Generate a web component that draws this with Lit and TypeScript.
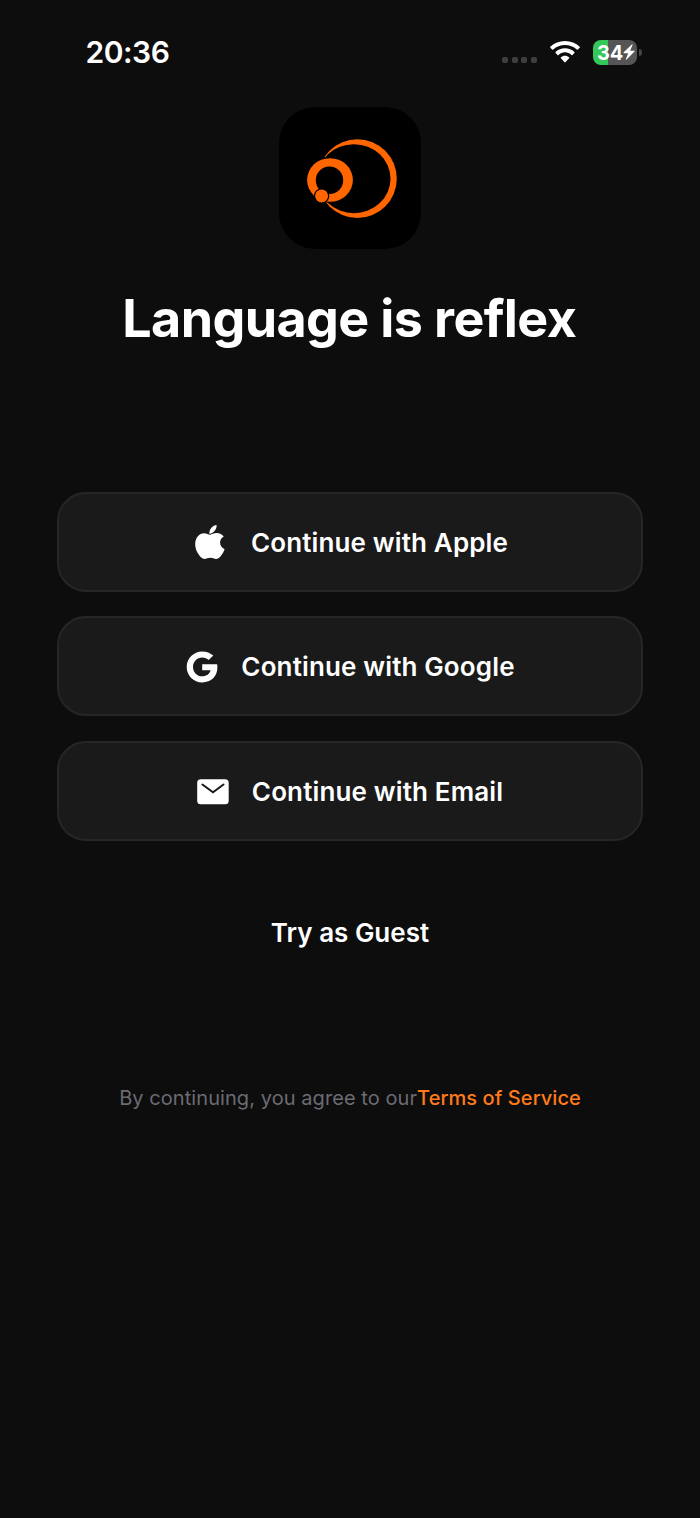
import { LitElement, html, css, svg } from "lit";
import { customElement } from "lit/decorators.js";

const appleIcon = svg`<svg class="apple" viewBox="0 0 30 36" width="30" height="36">
  <path fill="#fff" d="M21.600 1c.2 2.300-.7 4.500-2.100 6.100-1.400 1.600-3.300 2.800-5.200 2.700-.2-2.200.8-4.600 2.100-6.100C17.700 2.200 19.900 1.100 21.600 1z"/>
  <path fill="#fff" d="M28.700 12.500c-2.300 1.400-3.600 3.500-3.600 6.100 0 3 1.800 5.500 4.500 6.600-.6 1.900-1.500 3.700-2.700 5.400-1.600 2.300-3.200 4.300-5.600 4.300-2.500 0-3.200-1.100-6-1.100-2.700 0-3.700 1.100-5.900 1.100-2.400 0-4.100-2.100-5.700-4.400C1.500 27.700.2 23.900.2 20.200c0-6.700 4.200-11 8.800-11 2.500 0 4.500 1.500 6.100 1.500 1.500 0 3.800-1.600 6.700-1.600 2.700 0 5.300 1.200 6.900 3.400z"/>
</svg>`;

const googleIcon = svg`<svg class="google" viewBox="0 0 32 32" width="32" height="32">
  <path fill="#fff" d="M27.300 4.600 22.700 9.100C21 7.400 18.900 6.500 16.200 6.500c-5.100 0-9.200 4.200-9.200 9.400s4.100 9.400 9.200 9.400c4.400 0 7.500-2.300 8.400-6H16.200v-6h14.900c.2 1 .3 2 .3 3 0 9-6.100 15.100-15.200 15.100C7.600 31.400.7 24.500.7 15.900S7.600.4 16.200.4c4.300 0 8.100 1.500 11.100 4.200z"/>
</svg>`;

const mailIcon = svg`<svg class="mail" viewBox="0 0 32 26" width="32" height="26">
  <rect x=".2" y=".3" width="31.500" height="25" rx="3.600" fill="#fff"/>
  <path d="M5.400 5.500 16 13.300 26.500 5.500" fill="none" stroke="#1a1a1a" stroke-width="2" stroke-linecap="round" stroke-linejoin="miter"/>
</svg>`;

@customElement("app-root")
export class AppRoot extends LitElement {
  static styles = css`
    :host {
      display: flex;
      flex-direction: column;
      align-items: center;
      box-sizing: border-box;
      width: 700px;
      height: 1518px;
      background: #0d0d0d;
      color: #fff;
      font-family: Inter, "Liberation Sans", sans-serif;
      overflow: hidden;
    }
    svg { display: block; flex: none; }
    .status {
      width: 100%;
      height: 107px;
      box-sizing: border-box;
      padding: 32px 58px 0 85.500px;
      display: flex;
      justify-content: space-between;
      align-items: flex-start;
    }
    .time { font-size: 30px; line-height: 40px; font-weight: 600; letter-spacing: -0.5px; white-space: nowrap; }
    .indicators { display: flex; align-items: flex-start; padding-top: 8px; }
    .dots { display: flex; gap: 3.600px; padding-top: 17px; margin-right: 13px; }
    .dots i { width: 6px; height: 6px; border-radius: 2px; background: #3e3e3e; }
    .wifi { margin-right: 13px; }
    .battery {
      width: 44px;
      height: 24.500px;
      border-radius: 8px;
      background: linear-gradient(90deg, #34c759 15.500px, #555 15.500px);
      display: flex;
      align-items: center;
      box-sizing: border-box;
      padding-left: 4px;
    }
    .level { font-size: 20px; line-height: 24px; font-weight: 700; letter-spacing: -0.2px; padding-top: 1px; }
    .nub { margin: 9px 0 0 2px; width: 3px; height: 7px; border-radius: 0 4px 4px 0; background: #444; }
    .tile { width: 142px; height: 142px; border-radius: 36px; background: #000; }
    h1 {
      margin: 37px 1.500px 0 0;
      font-size: 52px;
      line-height: 66px;
      font-weight: 700;
      letter-spacing: -0.6px;
      white-space: nowrap;
    }
    .actions { display: flex; flex-direction: column; gap: 24.700px; margin-top: 139.500px; }
    button {
      width: 586px;
      height: 100px;
      box-sizing: border-box;
      padding: 0;
      border: 2px solid #262626;
      border-radius: 29px;
      background: #1a1a1a;
      color: #fff;
      font: 600 26px/34px Inter, "Liberation Sans", sans-serif;
      letter-spacing: 0.140px;
      display: flex;
      align-items: center;
      justify-content: center;
      white-space: nowrap;
    }
    button span { padding-top: 2px; }
    .apple { margin: 0 25.500px 0 3.500px; }
    .google { margin: 1.500px 23px 0 1px; }
    .mail { margin: 1.500px 23px 0 0; }
    .guest { margin-top: 75px; font-size: 26px; line-height: 34px; font-weight: 600; white-space: nowrap; }
    .legal { margin-top: 135px; font-size: 20px; line-height: 26px; letter-spacing: 0.070px; color: #6b6b73; white-space: nowrap; display: flex; }
    .terms { color: #ff7a1a; font-weight: 500; }
  `;

  render() {
    return html`
      <div class="status">
        <span class="time">20:36</span>
        <div class="indicators">
          <div class="dots"><i></i><i></i><i></i><i></i></div>
          <svg class="wifi" viewBox="0 0 30 24" width="30" height="24">
            <g fill="#fff">
              <path d="M15 1C9.300 1 4.100 3.100.3 6.700c-.3.300-.3.700 0 1l1.900 1.900c.3.300.7.300 1 0C6.400 6.700 10.500 5.100 15 5.100s8.600 1.600 11.800 4.500c.3.300.7.300 1 0l1.900-1.900c.3-.3.300-.7 0-1C25.900 3.100 20.700 1 15 1z"/>
              <path d="M15 8.300c-3.600 0-6.900 1.300-9.400 3.600-.3.300-.3.700 0 1l2 2c.3.300.7.300 1 0C10.300 13.300 12.500 12.300 15 12.300s4.700 1 6.400 2.600c.3.300.7.300 1 0l2-2c.3-.3.300-.7 0-1C21.900 9.600 18.600 8.300 15 8.300z"/>
              <path d="M15 15.700c-1.600 0-3 .6-4.100 1.500-.3.300-.3.700 0 1l3.500 3.900c.3.400.9.400 1.200 0l3.500-3.900c.3-.3.300-.7 0-1-1.100-.9-2.500-1.500-4.100-1.500z"/>
            </g>
          </svg>
          <div class="battery">
            <span class="level">34</span>
            <svg viewBox="0 0 12 16" width="12" height="16"><path fill="#fff" d="M8.800.4.700 8.300c-.4.400-.2.900.3.900h4.200l-2.300 5.900c-.2.600.3.900.7.500l7.900-8c.4-.4.200-.9-.3-.9H7.100L9.500.9c.2-.6-.3-.9-.7-.5z"/></svg>
          </div>
          <div class="nub"></div>
        </div>
      </div>

      <svg class="tile" viewBox="279 107 142 142">
        <circle cx="357.400" cy="178.700" r="39.400" fill="#ff6600"/>
        <ellipse cx="353.900" cy="178.700" rx="36.600" ry="34.500" fill="#000"/>
        <path fill="#000" d="M314 157h11.500v45H314z"/>
        <ellipse cx="330" cy="180" rx="23.800" ry="22.800" fill="#000"/>
        <ellipse cx="330" cy="180" rx="22.900" ry="21.800" fill="#ff6600"/>
        <circle cx="329.500" cy="180.300" r="13.700" fill="#000"/>
        <circle cx="321.600" cy="195.900" r="7.100" fill="#ff6600" stroke="#000" stroke-width="1.200"/>
      </svg>

      <h1>Language is reflex</h1>

      <div class="actions">
        <button>${appleIcon}<span>Continue with Apple</span></button>
        <button>${googleIcon}<span>Continue with Google</span></button>
        <button>${mailIcon}<span>Continue with Email</span></button>
      </div>

      <div class="guest">Try as Guest</div>
      <div class="legal"><span>By continuing, you agree to our</span><span class="terms">Terms of Service</span></div>
    `;
  }
}
